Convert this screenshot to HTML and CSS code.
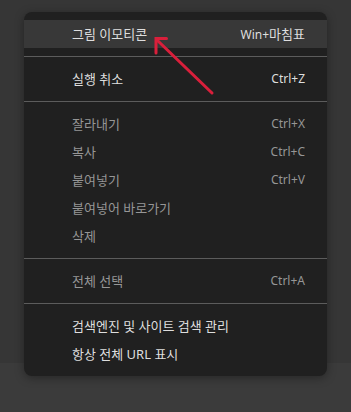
FILE: index.html
```html
<!DOCTYPE html>
<html lang="ko">
<head>
<meta charset="utf-8">
<link rel="stylesheet" href="styles.css">
</head>
<body>
<div class="page">
  <div class="backdrop"></div>
  <div class="band"></div>
  <div class="menu">
    <div class="group">
      <div class="item active"><span>그림 이모티콘</span><span class="key">Win+<span class="ko">마침표</span></span></div>
    </div>
    <div class="sep"></div>
    <div class="group">
      <div class="item"><span>실행 취소</span><span class="key">Ctrl+Z</span></div>
    </div>
    <div class="sep"></div>
    <div class="group">
      <div class="item off"><span>잘라내기</span><span class="key">Ctrl+X</span></div>
      <div class="item off"><span>복사</span><span class="key">Ctrl+C</span></div>
      <div class="item off"><span>붙여넣기</span><span class="key">Ctrl+V</span></div>
      <div class="item off"><span>붙여넣어 바로가기</span></div>
      <div class="item off"><span>삭제</span></div>
    </div>
    <div class="sep"></div>
    <div class="group">
      <div class="item off"><span>전체 선택</span><span class="key">Ctrl+A</span></div>
    </div>
    <div class="sep"></div>
    <div class="group">
      <div class="item"><span>검색엔진 및 사이트 검색 관리</span></div>
      <div class="item"><span>항상 전체 URL 표시</span></div>
    </div>
  </div>
  <svg class="arrow" width="351" height="412" viewBox="0 0 351 412">
    <line x1="212" y1="93" x2="158" y2="41" stroke="#d91f3b" stroke-width="3" stroke-linecap="round"/>
    <polyline points="166.5,38.5 156,38.5 156,53" fill="none" stroke="#d91f3b" stroke-width="3" stroke-linecap="round" stroke-linejoin="miter"/>
  </svg>
</div>
</body>
</html>
```

FILE: styles.css
```css
html, body {
  margin: 0;
  padding: 0;
}
body {
  background: #363636;
  font-family: "Noto Sans", "Noto Sans CJK KR", sans-serif;
  font-size: 12px;
  width: 351px;
  height: 412px;
  overflow: hidden;
}
.page {
  position: relative;
  width: 351px;
  height: 412px;
  display: flex;
  flex-direction: column;
}
.backdrop {
  height: 363px;
  background: #363636;
}
.band {
  flex: 1;
  background: #3b3b3b;
}
.menu {
  position: absolute;
  top: 12px;
  left: 24px;
  width: 303px;
  background: #202020;
  border-radius: 8px;
  box-shadow: 0 2px 10px rgba(0, 0, 0, 0.35);
  overflow: hidden;
}
.group {
  padding: 8px 0;
}
.sep {
  height: 1px;
  background: #5c5c5c;
}
.item {
  height: 28px;
  line-height: 28px;
  padding: 0 22px 0 48px;
  display: flex;
  justify-content: space-between;
  align-items: center;
  color: #dedede;
  font-size: 13px;
  white-space: nowrap;
}
.item.active {
  background: #383838;
}
.item.off {
  color: #969696;
}
.key {
  font-size: 12px;
  color: inherit;
}
.key .ko {
  font-size: 13px;
}
.arrow {
  position: absolute;
  top: 0;
  left: 0;
  pointer-events: none;
}
```
